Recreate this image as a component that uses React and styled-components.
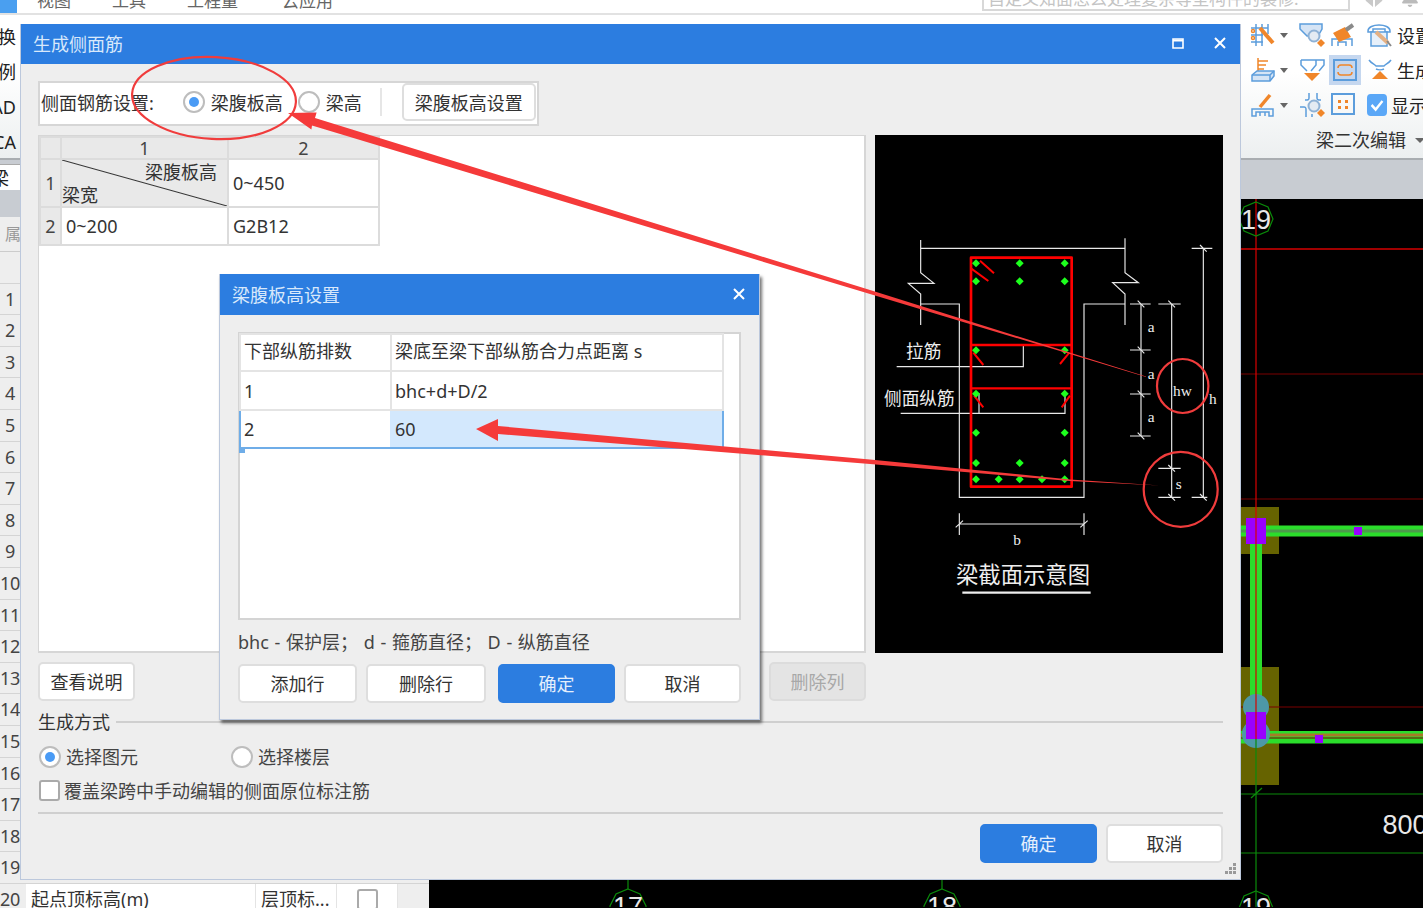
import React from "react";
import styled, { createGlobalStyle } from "styled-components";
import { FaBell } from "react-icons/fa";

const BLUE = "#2c7de0";
const TEXT = "#333";
const ICON_BLUE = "#5c9ddc";
const ORANGE = "#f0862a";

const Global = createGlobalStyle`
  html, body { margin: 0; padding: 0; background: #eee; }
  * { box-sizing: border-box; }
  body { font-family: "Noto Sans", "Noto Sans CJK SC", sans-serif; font-size: 18px; color: ${TEXT}; }
`;

const Page = styled.div`
  position: relative;
  width: 1423px;
  height: 908px;
  overflow: hidden;
  display: flex;
  flex-direction: column;
  background: #eee;
`;

/* app behind the dialogs */
const MenuBar = styled.div`
  height: 15px;
  flex: none;
  display: flex;
  align-items: flex-end;
  background: #fff;
  border-bottom: 2px solid #e2e2e2;
  color: #555;
`;
const AppTab = styled.div`
  width: 17px;
  height: 13px;
  background: #4a9ff0;
  margin-right: 20px;
  flex: none;
`;
const MenuItem = styled.div`
  flex: none;
  height: 24px;
  line-height: 24px;
  margin-right: ${(p) => p.$gap}px;
  color: #666;
  font-size: 17px;
`;
const SearchBox = styled.div`
  flex: none;
  width: 368px;
  height: 24px;
  margin-left: 649px;
  padding-left: 4px;
  line-height: 20px;
  border: 2px solid #d8d8d8;
  color: #c4c4c4;
  font-size: 17px;
  white-space: nowrap;
  overflow: hidden;
  transform: translateY(-2px);
`;
const TopIcons = styled.div`
  flex: none;
  display: flex;
  align-items: center;
  gap: 15px;
  margin-left: 12px;
  height: 18px;
  color: #bbb;
  font-size: 18px;
  transform: translateY(-6px);
`;

const Ribbon = styled.div`
  height: 145px;
  flex: none;
  display: flex;
  justify-content: space-between;
  background: linear-gradient(#fff 40%, #eceff0);
  border-bottom: 2px solid #a9adb1;
`;
const RibbonLabels = styled.div`
  width: 16px;
  padding-top: 5px;
  display: flex;
  flex-direction: column;
  align-items: flex-end;
  color: #222;
`;
const RibbonLabel = styled.div`
  height: 35px;
  line-height: 35px;
  white-space: nowrap;
`;
const ToolGroup = styled.div`
  width: 182px;
  padding: 2px 0 0 9px;
  display: flex;
  flex-direction: column;
  overflow: hidden;
`;
const ToolGrid = styled.div`
  display: grid;
  grid-template-columns: 49px 31px 37px auto;
  grid-auto-rows: 35px;
  align-items: center;
`;
const Tool = styled.div`
  display: flex;
  align-items: center;
  height: ${(p) => (p.$active ? "30px" : "35px")};
  width: ${(p) => (p.$active ? "32px" : "auto")};
  padding-left: ${(p) => (p.$active ? "3px" : "0")};
  margin-left: ${(p) => (p.$active ? "-1px" : "0")};
  background: ${(p) => (p.$active ? "#c5d7ef" : "transparent")};
  white-space: nowrap;
  color: #222;
`;
const Caret = styled.span`
  width: 0;
  height: 0;
  margin-left: 4px;
  margin-top: 1px;
  border: 4px solid transparent;
  border-top: 5px solid #666;
  border-bottom: 0;
`;
const ToolText = styled.span`
  margin-left: 4px;
`;
const GroupLabel = styled.div`
  margin-top: 3px;
  padding-left: 66px;
  line-height: 30px;
  color: #333;
  display: flex;
  align-items: center;
  white-space: nowrap;
`;
const GroupCaret = styled(Caret)`
  margin-left: 9px;
  border-left-width: 5px;
  border-right-width: 5px;
`;

const TabBand = styled.div`
  height: 39px;
  flex: none;
  padding-top: 4px;
  background: #c8ccd2;
`;
const Tab = styled.div`
  width: 200px;
  height: 26px;
  background: #fff;
  line-height: 26px;
  color: #222;
  text-indent: -9px;
  border-top: 1px solid #aaa;
`;

const Main = styled.div`
  flex: 1;
  min-height: 0;
  display: flex;
`;
const SidePane = styled.div`
  width: 429px;
  flex: none;
  background: #fff;
  padding-top: 18px;
`;
const SideStrip = styled.div`
  height: 18px;
  margin-top: -18px;
  background: #c8ccd2;
`;
const SideHead = styled.div`
  height: 35px;
  line-height: 35px;
  background: #eee;
  padding-left: 5px;
  color: #999;
  font-size: 16px;
  border-bottom: 1px solid #ccc;
`;
const SideRow = styled.div`
  height: 31.6px;
  display: flex;
  background: #eee;
  border-bottom: 1px solid #d4d4d4;
`;
const RowNum = styled.div`
  width: 26px;
  padding-right: 6px;
  line-height: 31px;
  text-align: center;
  color: #444;
  white-space: nowrap;
  letter-spacing: -0.3px;
`;
const RowCell = styled.div`
  width: ${(p) => p.$w}px;
  flex: none;
  padding-left: ${(p) => (p.$center ? 0 : 5)}px;
  background: #fff;
  border-right: 1px solid #e4e4e4;
  line-height: 30px;
  white-space: nowrap;
  display: flex;
  align-items: center;
  justify-content: ${(p) => (p.$center ? "center" : "flex-start")};
`;
const CanvasWrap = styled.div`
  flex: 1;
  background: #000;
  svg { display: block; }
`;

/* main dialog */
const Dialog = styled.div`
  position: absolute;
  left: 20px;
  top: 24px;
  width: 1221px;
  height: 856px;
  background: #eee;
  border: 1px solid #bcc8dc;
  border-top: 0;
  display: flex;
  flex-direction: column;
`;
const TitleBar = styled.div`
  height: ${(p) => p.$h}px;
  flex: none;
  display: flex;
  align-items: center;
  justify-content: space-between;
  padding: 0 14px 2px 12px;
  background: ${BLUE};
  color: #d8e8fb;
  font-size: 18px;
`;
const TitleActions = styled.div`
  display: flex;
  align-items: center;
  gap: 30px;
`;
const DialogBody = styled.div`
  flex: 1;
  padding: 17px 17px 0;
  display: flex;
  flex-direction: column;
`;
const Toolbar = styled.div`
  width: 501px;
  height: 45px;
  display: flex;
  align-items: center;
  padding: 0 0 3px 1px;
  background: #fff;
  border: 2px solid #d6d6d6;
  white-space: nowrap;
`;
const Radio = styled.span`
  flex: none;
  width: 22px;
  height: 22px;
  border-radius: 50%;
  background: #fff;
  border: 2px solid #bdbdbd;
  display: inline-flex;
  align-items: center;
  justify-content: center;
  &::after {
    content: "";
    width: 10px;
    height: 10px;
    border-radius: 50%;
    background: ${(p) => (p.$on ? "#4a9bf5" : "transparent")};
  }
`;
const ToolbarRadio = styled.label`
  display: flex;
  align-items: center;
  gap: 6px;
  margin-left: ${(p) => p.$ml}px;
`;
const VLine = styled.div`
  width: 2px;
  height: 28px;
  margin: 0 20px 0 18px;
  background: #e6e6e6;
`;
const Button = styled.div`
  flex: none;
  width: ${(p) => p.$w}px;
  height: ${(p) => p.$h || 39}px;
  margin-left: ${(p) => p.$ml || 0}px;
  padding-bottom: 1px;
  display: flex;
  align-items: center;
  justify-content: center;
  border-radius: 5px;
  background: ${(p) => (p.$primary ? BLUE : p.$disabled ? "#e4e4e4" : "#fff")};
  color: ${(p) => (p.$primary ? "#e4effc" : p.$disabled ? "#a8a8a8" : TEXT)};
  border: 2px solid ${(p) => (p.$primary ? BLUE : p.$disabled ? "#dcdcdc" : "#dedede")};
`;
const Work = styled.div`
  margin-top: 9px;
  height: 518px;
  display: grid;
  grid-template-columns: 828px 348px;
  gap: 9px;
`;
const GridPanel = styled.div`
  background: #fff;
  border: 2px solid #d6d6d6;
  border-left-width: 1px;
  border-top-width: 1px;
`;
const SpecTable = styled.table`
  border-collapse: collapse;
  table-layout: fixed;
  width: 339px;
`;
const HeadCell = styled.th`
  height: ${(p) => p.$h}px;
  width: ${(p) => p.$w}px;
  padding: 0;
  line-height: 20px;
  background: #e9e9e9;
  border: 2px solid #dcdcdc;
  font-weight: 400;
  color: #444;
  text-align: center;
`;
const Cell = styled.td`
  padding: 0 0 1px 4px;
  line-height: 24px;
  border: 2px solid #dcdcdc;
  background: #fff;
`;
const CornerCell = styled.td`
  padding: 0;
  border: 2px solid #dcdcdc;
  background: linear-gradient(
    to top right,
    #e9e9e9 calc(50% - 1px),
    #333 50%,
    #e9e9e9 calc(50% + 1px)
  );
`;
const CornerTop = styled.div`
  text-align: right;
  padding-right: 10px;
  line-height: 24px;
`;
const CornerBottom = styled.div`
  line-height: 22px;
`;
const Drawing = styled.div`
  background: #000;
  svg { display: block; }
`;
const ActionRow = styled.div`
  margin-top: 9px;
  width: 828px;
  display: flex;
  justify-content: space-between;
`;
const Legend = styled.div`
  margin-top: 11px;
  height: 20px;
  line-height: 20px;
  display: flex;
  align-items: center;
  gap: 6px;
  &::after {
    content: "";
    flex: 1;
    height: 2px;
    background: #cfcfcf;
  }
`;
const OptionRow = styled.div`
  margin-top: 13px;
  padding-left: 1px;
  display: flex;
  height: 24px;
  line-height: 24px;
  color: #444;
`;
const Option = styled.label`
  width: 192px;
  display: flex;
  align-items: center;
  gap: 5px;
`;
const CheckRow = styled.div`
  margin-top: 10px;
  padding-left: 1px;
  height: 22px;
  display: flex;
  align-items: center;
  gap: 4px;
  color: #444;
`;
const CheckBox = styled.span`
  width: 21px;
  height: 21px;
  flex: none;
  background: #fff;
  border: 2px solid #aaa;
  border-radius: 3px;
`;
const Rule = styled.div`
  margin-top: 11px;
  height: 2px;
  background: #cfcfcf;
`;
const Footer = styled.div`
  margin-top: 10px;
  display: flex;
  justify-content: flex-end;
  gap: 9px;
`;
const Grip = styled.svg`
  position: absolute;
  right: 3px;
  bottom: 3px;
`;

/* nested dialog */
const SubDialog = styled.div`
  position: absolute;
  left: 198px;
  top: 250px;
  width: 541px;
  height: 446px;
  background: #eee;
  border: 1px solid #bcc8dc;
  border-top: 0;
  box-shadow: 2px 3px 3px rgba(0, 0, 0, 0.55);
  display: flex;
  flex-direction: column;
`;
const SubBody = styled.div`
  flex: 1;
  padding: 17px 18px 0;
`;
const RowsPanel = styled.div`
  height: 288px;
  background: #fff;
  border: 2px solid #d4d4d4;
`;
const RowsTable = styled.table`
  border-collapse: collapse;
  table-layout: fixed;
  width: 483px;
  margin: -1px 0 0 -1px;
`;
const RowsCell = styled.td`
  position: relative;
  height: ${(p) => p.$h}px;
  width: ${(p) => p.$w}px;
  padding: 0 0 ${(p) => (p.$head ? 3 : 0)}px 3px;
  line-height: 24px;
  white-space: nowrap;
  background: ${(p) => (p.$sel ? "#d3e8fd" : "#fff")};
  border: 2px solid ${(p) => (p.$edge ? "#6fade8" : "#e4e4e4")};
  border-right-color: ${(p) => (p.$join ? "#d3e8fd" : p.$edge ? "#6fade8" : "#e4e4e4")};
  color: #333;
`;
const Handle = styled.i`
  position: absolute;
  left: -2px;
  bottom: -6px;
  width: 6px;
  height: 5px;
  background: #6fade8;
`;
const Note = styled.div`
  margin-top: 9px;
  line-height: 26px;
  white-space: nowrap;
  word-spacing: 1px;
  color: #444;
`;
const SubActions = styled.div`
  margin-top: 9px;
  display: flex;
  gap: 9px;
`;

/* red annotations sit on top of everything */
const Marks = styled.svg`
  position: absolute;
  left: 0;
  top: 0;
  pointer-events: none;
`;

const CloseGlyph = () => (
  <svg width="12" height="12" viewBox="0 0 12 12">
    <path d="M1 1L11 11M11 1L1 11" stroke="#fff" strokeWidth="2" />
  </svg>
);
const MaxGlyph = () => (
  <svg width="12" height="11" viewBox="0 0 12 11">
    <path d="M1 1H11V10H1Z" fill="none" stroke="#fff" strokeWidth="1.6" />
    <path d="M1 2.5H11" stroke="#fff" strokeWidth="2" />
  </svg>
);
const UserGlyph = () => (
  <svg width="24" height="18" viewBox="0 0 24 18" fill="#c9c9c9">
    <path d="M0 4L11 0V18L4 12ZM24 4L13 0V18L20 12Z" />
  </svg>
);

/* ribbon icons, 26x26 */
const Ico = ({ children }) => (
  <svg width="26" height="26" viewBox="0 0 26 26" fill="none" stroke={ICON_BLUE} strokeWidth="1.5">
    {children}
  </svg>
);
const icons = {
  rebar: (
    <Ico>
      <path d="M1 6H18M1 13H13M1 20H13M6 2V24M12 2V24M18 2V12" />
      <circle cx="3" cy="9" r="1.5" stroke={ORANGE} />
      <circle cx="3" cy="16" r="1.5" stroke={ORANGE} />
      <path d="M10 6L23 21" stroke={ORANGE} strokeWidth="4" />
    </Ico>
  ),
  headZoom: (
    <Ico>
      <path d="M1 2H23V7L19 14H8L1 7Z" fill="#d5e4f5" />
      <circle cx="15" cy="14" r="5.5" fill="#e4ebf3" stroke="#8fb2d6" strokeWidth="2" />
      <path d="M22 17L26 21L22 25L18 21Z" fill={ORANGE} stroke="none" />
    </Ico>
  ),
  brush: (
    <Ico>
      <path d="M2 24V17H22V24M8 24V20H16V24" />
      <path d="M3 11L15 5L21 15L9 20Z" fill={ORANGE} stroke="none" />
      <path d="M16 8L23 3" stroke="#8a8a8a" strokeWidth="4" />
    </Ico>
  ),
  phone: (
    <Ico>
      <path d="M1 9C1 1 23 1 23 9V10H18V7H6V10H1Z" />
      <path d="M4 10H20V24H4Z" fill="#e7f0fa" />
      <path d="M9 10L21 21" stroke="#e5b184" strokeWidth="4" />
      <path d="M20 19L24 24" stroke="#888" strokeWidth="2" />
    </Ico>
  ),
  comb: (
    <Ico>
      <path d="M8 1V14M8 4H18M8 8H16M8 12H14" stroke={ORANGE} />
      <path d="M2 18L7 14H24V19L20 24H2Z" fill="#d5e4f5" />
      <path d="M2 18H20V24M20 18L24 14" />
    </Ico>
  ),
  funnel: (
    <Ico>
      <path d="M2 3H17V8L12 14M8 14L2 8V3M10 3H25V8L20 14" />
      <path d="M5 16H21L13 24Z" fill={ORANGE} stroke="none" />
    </Ico>
  ),
  span: (
    <Ico>
      <path d="M2 3H24V23H2Z" strokeWidth="2" />
      <path d="M6 11C6 8 8 8 9 8H17C18 8 20 8 20 11M6 15C6 18 8 18 9 18H17C18 18 20 18 20 15" stroke={ORANGE} />
    </Ico>
  ),
  cup: (
    <Ico>
      <path d="M2 3C4 6 7 7 9 9H17C19 7 22 6 24 3M9 12C11 13 15 13 17 12" />
      <path d="M5 22L13 14L21 22Z" fill={ORANGE} stroke="none" />
    </Ico>
  ),
  table: (
    <Ico>
      <path d="M2 24V17H23V24H19V20H6V24ZM10 20V24M15 20V24" />
      <path d="M10 15L20 3" stroke={ORANGE} strokeWidth="3.5" />
    </Ico>
  ),
  radial: (
    <Ico>
      <path d="M10 1V6C10 8 9 8 6 8M18 1V6C18 8 19 8 22 8M1 15H5C7 15 7 16 7 18V25M13 25V22" />
      <circle cx="15" cy="14" r="5.5" fill="#e4ebf3" stroke="#8fb2d6" strokeWidth="2" />
      <path d="M22 17L26 21L22 25L18 21Z" fill={ORANGE} stroke="none" />
    </Ico>
  ),
  dots: (
    <Ico>
      <path d="M2 2H24V22H2Z" strokeWidth="2" />
      <path d="M8 8H11V11H8ZM15 8H18V11H15ZM8 14H11V17H8ZM15 14H18V17H15Z" fill={ORANGE} stroke="none" />
    </Ico>
  ),
  check: (
    <svg width="20" height="22" viewBox="0 0 22 22" preserveAspectRatio="none">
      <rect x="0" y="0" width="22" height="22" rx="4" fill="#5aa7f7" />
      <path d="M5 11L9.5 15.5L17 7" fill="none" stroke="#fff" strokeWidth="2.6" />
    </svg>
  ),
};

/* green rebar dots of the section drawing, in drawing coordinates */
const DOTS = [
  [318, 130], [449, 130], [584, 130], [318, 184], [449, 184], [584, 184],
  [318, 391], [584, 391], [318, 521], [584, 521], [318, 638], [584, 638],
  [318, 729], [449, 729], [584, 729], [318, 778], [386, 778], [449, 778],
  [516, 778], [584, 778],
];
const TICKS = [
  [780, 842, 252, 813], [780, 842, 390, 813], [780, 842, 522, 813], [780, 842, 648, 813],
  [865, 932, 252, 905], [865, 932, 745, 905], [865, 932, 832, 905],
  [965, 1027, 85, 1000], [965, 1012, 832, 1000],
];

function SectionDrawing() {
  return (
    <svg width="348" height="518" viewBox="15 -255 1044 1554">
      <rect x="15" y="-255" width="1044" height="1554" fill="#000" />
      <g fill="none" stroke="#e8e8e8" strokeWidth="3.5">
        <path d="M152 85H765" />
        <path d="M152 60V158L192 190H115L152 222V315" />
        <path d="M765 55V158L805 188H728L765 222V315" />
        <path d="M152 252H268V832H642V252H765" />
        <path d="M80 440H460V375M92 580H585V525M327 580V520" />
        <path d="M813 252V648M905 252V832M1000 85V832" />
        <path d="M268 912H642M268 880V945M642 880V945M257 922L279 902M631 922L653 902" />
        {TICKS.map(([a, b, y, c]) => (
          <path key={`${a}-${y}`} d={`M${a} ${y}H${b}M${c - 10} ${y - 10}L${c + 10} ${y + 10}`} />
        ))}
      </g>
      <g fill="none" stroke="#f00" strokeWidth="8" strokeLinejoin="round">
        <rect x="303" y="113" width="302" height="687" />
        <path d="M303 375H605M303 505H605" strokeWidth="7" />
        <path d="M303 145L355 183M330 122L372 160M310 398L340 435M598 398L570 432M312 527L340 562M600 527L575 562" strokeWidth="6" />
      </g>
      {DOTS.map(([x, y]) => (
        <path key={`${x}-${y}`} d={`M${x} ${y - 12}L${x + 12} ${y}L${x} ${y + 12}L${x - 12} ${y}Z`} fill="#1dff1d" />
      ))}
      <g fill="#eee" fontFamily='"Noto Sans CJK SC", sans-serif'>
        <text x="108" y="415" fontSize="53">拉筋</text>
        <text x="42" y="556" fontSize="53">侧面纵筋</text>
        <text x="258" y="1090" fontSize="67">梁截面示意图</text>
      </g>
      <path d="M277 1118H662" stroke="#eee" strokeWidth="7" />
      <g fill="#eee" fontFamily='"Liberation Serif", serif' fontSize="46">
        <text x="833" y="336">a</text>
        <text x="833" y="477">a</text>
        <text x="833" y="607">a</text>
        <text x="909" y="528">hw</text>
        <text x="1017" y="552">h</text>
        <text x="917" y="806">s</text>
        <text x="430" y="975">b</text>
      </g>
    </svg>
  );
}

function CadCanvas() {
  return (
    <svg width="994" height="708" viewBox="429 200 994 708">
      <g fill="#666300">
        <rect x="1241" y="508" width="38" height="47" />
        <rect x="1241" y="668" width="38" height="118" />
      </g>
      <g stroke="#7a0000" strokeWidth="1">
        <path d="M429 250H1423" stroke="#a00000" strokeWidth="2" />
        <path d="M429 375H1423M429 500H1423M429 708H1423" />
      </g>
      <g fill="#2bdd2b">
        <rect x="1241" y="526.5" width="182" height="11" />
        <rect x="1250" y="537" width="12" height="170" />
        <rect x="1241" y="732" width="182" height="12.5" />
      </g>
      <path d="M1241 532H1423" stroke="#4c9a4c" strokeWidth="3" />
      <path d="M1241 736H1423" stroke="#a67a28" strokeWidth="3" />
      <path d="M1241 739H1423" stroke="#7a0000" strokeWidth="1" />
      <circle cx="1256" cy="708" r="13" fill="#4d98a6" />
      <circle cx="1256" cy="735" r="14" fill="#4d98a6" />
      <g fill="#9900ff">
        <rect x="1246" y="519" width="20" height="26" />
        <rect x="1246" y="713" width="20" height="27" />
        <rect x="1354" y="528" width="8" height="8" />
        <rect x="1315" y="736" width="8" height="8" />
      </g>
      <path d="M1256 200V740" stroke="#d80000" strokeWidth="1.2" />
      <g stroke="#0a8a0a" strokeWidth="1.2" fill="none">
        <path d="M1256 740V908M1241 795H1423M1241 854H1423M1251 799L1262 789" />
        <path d="M1256 203L1268 208L1273 220L1268 232L1256 237L1244 232L1239 220L1244 208Z" />
        <path d="M1256 892L1268 897L1273 909V920H1239V909L1244 897Z" />
        <path d="M628 890L640 895L646 907V920H610V907L616 895Z" />
        <path d="M942 890L954 895L960 907V920H924V907L930 895Z" />
        <path d="M628 880V890M942 880V890" />
      </g>
      <g fill="#e8e8e8" fontFamily='"Liberation Sans", sans-serif' fontSize="27" textAnchor="middle">
        <text x="1256" y="230">19</text>
        <text x="1256" y="918">19</text>
        <text x="628" y="917">17</text>
        <text x="942" y="917">18</text>
        <text x="1405" y="835">800</text>
      </g>
    </svg>
  );
}

export default function App() {
  const rows = Array.from({ length: 19 }, (_, i) => i + 1);
  return (
    <Page>
      <Global />
      <MenuBar>
        <AppTab />
        <MenuItem $gap={41}>视图</MenuItem>
        <MenuItem $gap={41}>工具</MenuItem>
        <MenuItem $gap={44}>工程量</MenuItem>
        <MenuItem $gap={0}>云应用</MenuItem>
        <SearchBox>自定义知面怎么处理复杂等型构件的装修:</SearchBox>
        <TopIcons>
          <UserGlyph />
          <FaBell />
        </TopIcons>
      </MenuBar>

      <Ribbon>
        <RibbonLabels>
          <RibbonLabel>换</RibbonLabel>
          <RibbonLabel>例</RibbonLabel>
          <RibbonLabel>AD</RibbonLabel>
          <RibbonLabel>CA</RibbonLabel>
        </RibbonLabels>
        <ToolGroup>
          <ToolGrid>
            <Tool>{icons.rebar}<Caret /></Tool>
            <Tool>{icons.headZoom}</Tool>
            <Tool>{icons.brush}</Tool>
            <Tool>{icons.phone}<ToolText>设置</ToolText></Tool>
            <Tool>{icons.comb}<Caret /></Tool>
            <Tool>{icons.funnel}</Tool>
            <Tool $active>{icons.span}</Tool>
            <Tool>{icons.cup}<ToolText>生成</ToolText></Tool>
            <Tool>{icons.table}<Caret /></Tool>
            <Tool>{icons.radial}</Tool>
            <Tool>{icons.dots}</Tool>
            <Tool>{icons.check}<ToolText>显示</ToolText></Tool>
          </ToolGrid>
          <GroupLabel>
            梁二次编辑
            <GroupCaret />
          </GroupLabel>
        </ToolGroup>
      </Ribbon>

      <TabBand>
        <Tab>梁</Tab>
      </TabBand>

      <Main>
        <SidePane>
          <SideStrip />
          <SideHead>属性</SideHead>
          <SideRow />
          {rows.map((n) => (
            <SideRow key={n}>
              <RowNum>{n}</RowNum>
            </SideRow>
          ))}
          <SideRow>
            <RowNum>20</RowNum>
            <RowCell $w={230}>起点顶标高(m)</RowCell>
            <RowCell $w={81}>层顶标...</RowCell>
            <RowCell $w={61} $center>
              <CheckBox />
            </RowCell>
          </SideRow>
        </SidePane>
        <CanvasWrap>
          <CadCanvas />
        </CanvasWrap>
      </Main>

      <Dialog>
        <TitleBar $h={40}>
          生成侧面筋
          <TitleActions>
            <MaxGlyph />
            <CloseGlyph />
          </TitleActions>
        </TitleBar>
        <DialogBody>
          <Toolbar>
            侧面钢筋设置:
            <ToolbarRadio $ml={29}>
              <Radio $on />
              梁腹板高
            </ToolbarRadio>
            <ToolbarRadio $ml={15}>
              <Radio />
              梁高
            </ToolbarRadio>
            <VLine />
            <Button $w={134} $h={38}>梁腹板高设置</Button>
          </Toolbar>

          <Work>
            <GridPanel>
              <SpecTable>
                <thead>
                  <tr>
                    <HeadCell $w={21} $h={22} />
                    <HeadCell $w={167}>1</HeadCell>
                    <HeadCell $w={151}>2</HeadCell>
                  </tr>
                </thead>
                <tbody>
                  <tr>
                    <HeadCell $h={48}>1</HeadCell>
                    <CornerCell>
                      <CornerTop>梁腹板高</CornerTop>
                      <CornerBottom>梁宽</CornerBottom>
                    </CornerCell>
                    <Cell>0~450</Cell>
                  </tr>
                  <tr>
                    <HeadCell $h={38}>2</HeadCell>
                    <Cell>0~200</Cell>
                    <Cell>G2B12</Cell>
                  </tr>
                </tbody>
              </SpecTable>
            </GridPanel>
            <Drawing>
              <SectionDrawing />
            </Drawing>
          </Work>

          <ActionRow>
            <Button $w={97}>查看说明</Button>
            <Button $w={97} $disabled>删除列</Button>
          </ActionRow>

          <Legend>生成方式</Legend>
          <OptionRow>
            <Option>
              <Radio $on />
              选择图元
            </Option>
            <Option>
              <Radio />
              选择楼层
            </Option>
          </OptionRow>
          <CheckRow>
            <CheckBox />
            覆盖梁跨中手动编辑的侧面原位标注筋
          </CheckRow>
          <Rule />
          <Footer>
            <Button $w={117} $primary>确定</Button>
            <Button $w={117}>取消</Button>
          </Footer>
        </DialogBody>
        <Grip width="14" height="14" viewBox="0 0 14 14" fill="#999">
          <path d="M10 1h3v3h-3zM6 5h3v3H6zM10 5h3v3h-3zM2 9h3v3H2zM6 9h3v3H6zM10 9h3v3h-3z" />
        </Grip>

        <SubDialog>
          <TitleBar $h={41}>
            梁腹板高设置
            <CloseGlyph />
          </TitleBar>
          <SubBody>
            <RowsPanel>
              <RowsTable>
                <tbody>
                  <tr>
                    <RowsCell $w={151} $h={37} $head>下部纵筋排数</RowsCell>
                    <RowsCell $w={332} $h={37} $head>梁底至梁下部纵筋合力点距离 s</RowsCell>
                  </tr>
                  <tr>
                    <RowsCell $h={39}>1</RowsCell>
                    <RowsCell $h={39}>bhc+d+D/2</RowsCell>
                  </tr>
                  <tr>
                    <RowsCell $edge $join $h={38}>
                      2
                      <Handle />
                    </RowsCell>
                    <RowsCell $edge $sel $h={38}>60</RowsCell>
                  </tr>
                </tbody>
              </RowsTable>
            </RowsPanel>
            <Note>bhc - 保护层； d - 箍筋直径； D - 纵筋直径</Note>
            <SubActions>
              <Button $w={119}>添加行</Button>
              <Button $w={120}>删除行</Button>
              <Button $w={117} $ml={3} $primary>确定</Button>
              <Button $w={117}>取消</Button>
            </SubActions>
          </SubBody>
        </SubDialog>
      </Dialog>

      <Marks width="1423" height="908" viewBox="0 0 1423 908" fill="none">
        <g stroke="#f03c3c" strokeWidth="2.2">
          <ellipse cx="214" cy="98" rx="82" ry="41" transform="rotate(3 214 98)" />
          <ellipse cx="1182.7" cy="386" rx="25.7" ry="27" />
          <ellipse cx="1180.7" cy="489.3" rx="37" ry="37.5" />
        </g>
        <path
          d="M288 113L316.6 112.4L315 118L870 290L1060 349.6L1146 376.5L1146 377L1060 351L870 294L312 125.5L311.4 129.6Z"
          fill="#f53a3a"
        />
        <path
          d="M476 429L498 419L498 426L870 459.5L1070 479.5L1160 485.5L1070 481L870 464L498 434L498 441Z"
          fill="#f53a3a"
        />
      </Marks>
    </Page>
  );
}
